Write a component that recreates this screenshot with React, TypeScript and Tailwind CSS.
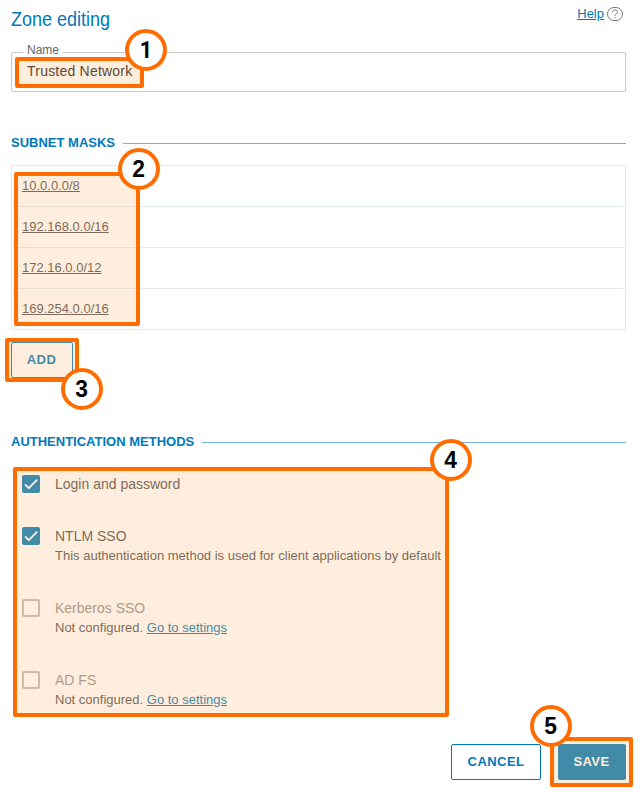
import React from 'react';

const sans = "font-['Liberation_Sans',Arial,sans-serif]";

function SectionTitle({ children }: { children: React.ReactNode }) {
  return (
    <div className="flex h-4 items-center gap-2">
      <h2 className="text-[13px] leading-4 font-bold text-[#0079bb] uppercase">{children}</h2>
      <div className="mt-px h-px flex-1 bg-[#73b4d7]" />
    </div>
  );
}

function Checkbox({ checked }: { checked: boolean }) {
  return checked ? (
    <span className="flex size-[18px] shrink-0 items-center justify-center rounded-[2px] bg-[#0079b8]">
      <svg width="18" height="18" viewBox="0 0 18 18" fill="none" stroke="white" strokeWidth="1.9">
        <path d="M3 9.3 6.8 13.1 15.2 4.7" />
      </svg>
    </span>
  ) : (
    <span className="size-[18px] shrink-0 rounded-[2px] border-2 border-[#bcbcbc]" />
  );
}

type MethodProps = { title: string; checked?: boolean; children?: React.ReactNode; className: string };

function Method({ title, checked = false, children, className }: MethodProps) {
  return (
    <label className={`flex gap-[15px] ${className}`}>
      <Checkbox checked={checked} />
      <span className="flex flex-col">
        <span className={`scale-y-[1.08] text-[14px] leading-[18px] whitespace-nowrap ${checked ? 'text-[#505050]' : 'text-[#909090]'}`}>{title}</span>
        {children && <span className="mt-[3px] text-[13px] leading-4 whitespace-nowrap text-[#505050]">{children}</span>}
      </span>
    </label>
  );
}

function SettingsLink() {
  return <a className="text-[#0079b8] underline">Go to settings</a>;
}

function Highlight({ className }: { className: string }) {
  return <div className={`pointer-events-none absolute rounded-[2px] border-4 border-[#ff6d00] bg-[rgba(255,190,122,0.255)] ${className}`} />;
}

function Marker({ n, className }: { n: number; className: string }) {
  return (
    <div className={`pointer-events-none absolute flex size-[42px] items-center justify-center rounded-full border-4 border-[#ff6d00] bg-white text-[24px] leading-none font-bold text-black ${className}`}>
      <span className={n === 1 ? 'scale-x-90 font-[Roboto,sans-serif]' : 'scale-x-95'}>{n}</span>
    </div>
  );
}

const masks = ['10.0.0.0/8', '192.168.0.0/16', '172.16.0.0/12', '169.254.0.0/16'];

export default function App() {
  return (
    <main className={`${sans} relative h-[788px] w-[640px] overflow-hidden bg-white pr-[14px] pl-[11px]`}>
      <header className="flex h-[52px] items-start justify-between pt-[6px]">
        <h1 className="mt-[2px] scale-y-[1.08] text-[18px] leading-6 text-[#0079bb]">Zone editing</h1>
        <div className="mr-[3px] flex items-center gap-[3px]">
          <a className="text-[13px] leading-4 text-[#0079bb] underline">Help</a>
          <svg width="16" height="14" viewBox="0 0 16 14" fill="none" stroke="#777">
            <rect x="0.5" y="0.5" width="15" height="13" rx="6.5" />
            <path d="M5.5 5.3C5.5 2.2 10.5 2.2 10.5 5.1C10.5 6.7 8 6.7 8 8.7M8 9.9v1.3" />
          </svg>
        </div>
      </header>

      <fieldset className="relative flex h-10 items-center rounded-[2px] border border-[#c8c8c8] pl-[15px]">
        <span className="absolute -top-[11px] left-[11px] bg-white px-1 text-[12px] leading-4 text-[#666]">Name</span>
        <span className="-mt-[2px] scale-y-[1.08] text-[14px] leading-5 tracking-[0.22px] text-[#212121]">Trusted Network</span>
      </fieldset>

      <section className="pt-[43px]">
        <SectionTitle>Subnet masks</SectionTitle>
        <ul className="mt-[14px] border border-[#e1ecf1]">
          {masks.map((m) => (
            <li key={m} className="flex h-[41px] items-center border-b border-[#e1ecf1] pl-[10px] text-[13px] text-[#505050] last:h-10 last:border-b-0">
              <a className="underline">{m}</a>
            </li>
          ))}
        </ul>
        <button className="mt-3 flex h-9 w-[62px] items-center justify-center rounded-[2px] border border-[#0079b8] pr-px text-[13px] font-bold tracking-[0.5px] text-[#0079bb]">ADD</button>
      </section>

      <section className="pt-14">
        <SectionTitle>Authentication methods</SectionTitle>
        <div className="pt-[25px] pl-[11px]">
          <Method title="Login and password" checked className="h-[52px]" />
          <Method title="NTLM SSO" checked className="h-[72px]">This authentication method is used for client applications by default</Method>
          <Method title="Kerberos SSO" className="h-[72px]">Not configured. <SettingsLink /></Method>
          <Method title="AD FS" className="h-[73px]">Not configured. <SettingsLink /></Method>
        </div>
      </section>

      <footer className="flex justify-end gap-[17px]">
        <button className="h-9 w-[90px] rounded-[2px] border border-[#0079b8] text-[13px] font-bold tracking-[0.45px] text-[#0079bb]">CANCEL</button>
        <button className="h-9 w-[68px] rounded-[2px] bg-[#0079b8] pr-px text-[13px] font-bold tracking-[0.45px] text-white">SAVE</button>
      </footer>

      <Highlight className="top-[57px] left-[15px] h-[31px] w-[129px]" />
      <Highlight className="top-[172px] left-[14px] h-[154px] w-[126px]" />
      <Highlight className="top-[338px] left-[5px] h-11 w-[74px]" />
      <Highlight className="top-[467px] left-[13px] h-[250px] w-[436px]" />
      <Highlight className="top-[737px] left-[550px] h-[50px] w-[83px]" />
      <Marker n={1} className="top-[29px] left-[125px]" />
      <Marker n={2} className="top-[148px] left-[118px]" />
      <Marker n={3} className="top-[368px] left-[61px]" />
      <Marker n={4} className="top-[439px] left-[430px]" />
      <Marker n={5} className="top-[705px] left-[530px]" />
    </main>
  );
}
